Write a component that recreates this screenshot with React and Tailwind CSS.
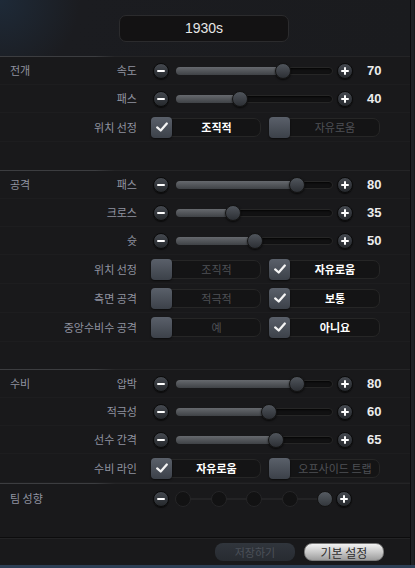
import React from "react";

const KR = { fontFamily: '"Noto Sans CJK KR", "Noto Sans", sans-serif' };
const NUM = { fontFamily: '"Liberation Sans", Arial, sans-serif' };

function RoundBtn({ plus }) {
  return (
    <div className="relative flex h-[16px] w-[16px] shrink-0 items-center justify-center rounded-full border border-[#0b0b0b] bg-[linear-gradient(to_bottom,#454950,#25282c)] shadow-[0_1px_1px_rgba(0,0,0,0.6)]">
      <div className="absolute h-[2px] w-[8px] rounded-[1px] bg-white" />
      {plus && <div className="absolute h-[8px] w-[2px] rounded-[1px] bg-white" />}
    </div>
  );
}

function Track({ value }) {
  const pos = `calc(${value / 100} * (100% - 16px) + 8px)`;
  return (
    <div className="relative ml-[7px] h-[16px] w-[157px] shrink-0">
      <div className="absolute left-0 right-0 top-[4px] h-[8px] rounded-full border border-[#262626] bg-[#111112] shadow-[inset_0_1px_2px_rgba(0,0,0,0.8)]" />
      <div
        className="absolute left-0 top-[4px] h-[8px] rounded-full bg-[linear-gradient(to_bottom,#66696e,#3f4246)]"
        style={{ width: pos }}
      />
      <div
        className="absolute top-0 h-[16px] w-[16px] -translate-x-1/2 rounded-full border border-[#141414] bg-[linear-gradient(to_bottom,#50555c,#2c2f34)] shadow-[0_1px_2px_rgba(0,0,0,0.7)]"
        style={{ left: pos }}
      />
    </div>
  );
}

function Label({ section, label }) {
  return (
    <div className="flex w-[137px] shrink-0 items-center justify-between pl-[10px] text-[11px] text-[#9093a0]" style={KR}>
      <span>{section}</span>
      <span>{label}</span>
    </div>
  );
}

function SliderRow({ section, label, value }) {
  return (
    <div className="flex h-[28px] items-center border-b border-[#1d1d1f]">
      <Label section={section} label={label} />
      <div className="ml-[16px] flex items-center">
        <RoundBtn />
        <Track value={value} />
        <div className="ml-[4px]">
          <RoundBtn plus />
        </div>
        <span className="ml-[14px] text-[13px] font-bold text-[#ececec]" style={NUM}>
          {value}
        </span>
      </div>
    </div>
  );
}

function Check() {
  return (
    <svg width="14" height="14" viewBox="0 0 16 16">
      <path d="M2.5 8.5 L6.5 12 L13.5 4" fill="none" stroke="#f4f4f4" strokeWidth="2.6" strokeLinecap="round" strokeLinejoin="round" />
    </svg>
  );
}

function Option({ text, on, width }) {
  return (
    <div className={`relative flex h-[21px] items-center ${width}`}>
      <div className="absolute left-0 right-0 top-[1px] h-[19px] rounded-[7px] border border-[#262626] bg-[#141415]" />
      <div className="relative z-10 flex h-[21px] w-[21px] shrink-0 items-center justify-center rounded-[4px] bg-[linear-gradient(to_bottom,#5a606a,#3c4149)] shadow-[0_1px_2px_rgba(0,0,0,0.6)]">
        {on && <Check />}
      </div>
      <span
        className={`relative z-10 flex-1 text-center text-[11px] ${on ? "font-bold text-white" : "text-[#4f5155]"}`}
        style={KR}
      >
        {text}
      </span>
    </div>
  );
}

function OptionRow({ section, label, a, b, sel }) {
  return (
    <div className="flex h-[29px] items-center border-b border-[#1d1d1f]">
      <Label section={section} label={label} />
      <div className="ml-[14px] flex items-center gap-[8px]">
        <Option text={a} on={sel === 0} width="w-[110px]" />
        <Option text={b} on={sel === 1} width="w-[111px]" />
      </div>
    </div>
  );
}

function Divider() {
  return <div className="h-px bg-[linear-gradient(to_right,#3c3d40_0,#3c3d40_95px,#242426_115px,#242426_100%)]" />;
}

function TeamRow() {
  const dots = [0, 1, 2, 3];
  return (
    <div className="flex h-[29px] items-center">
      <Label section="팀 성향" label="" />
      <div className="ml-[16px] flex items-center">
        <RoundBtn />
        <div className="relative ml-[6px] flex h-[16px] w-[158px] items-center justify-between">
          <div className="absolute left-[8px] right-[8px] top-[7px] h-[2px] bg-[#232325]" />
          {dots.map((d) => (
            <div key={d} className="relative h-[16px] w-[16px] rounded-full border border-[#252527] bg-[#121213]" />
          ))}
          <div className="relative h-[16px] w-[16px] rounded-full border border-[#141414] bg-[linear-gradient(to_bottom,#565b62,#33373c)]" />
        </div>
        <div className="ml-[3px]">
          <RoundBtn plus />
        </div>
      </div>
    </div>
  );
}

export default function App() {
  return (
    <div className="flex h-[568px] w-[415px] flex-col overflow-hidden bg-[#19191b]">
      <div className="flex flex-1">
        <div className="flex w-[411px] flex-col border-r border-[#0c0c0d]">
          {/* title */}
          <div className="h-[56px] bg-[radial-gradient(circle_at_0_0,#1e2a38_0,#1b1c20_80px,#1a1b1e_100%)] pt-[15px]">
            <div className="ml-[119px] flex h-[27px] w-[170px] items-center justify-center rounded-[7px] border border-[#2b2b2d] bg-[#131213]">
              <span className="text-[14px] text-[#e6e6e6]" style={{ fontFamily: '"Liberation Sans Narrow", "Liberation Sans", sans-serif' }}>
                1930s
              </span>
            </div>
          </div>

          <Divider />
          <SliderRow section="전개" label="속도" value={70} />
          <SliderRow label="패스" value={40} />
          <OptionRow label="위치 선정" a="조직적" b="자유로움" sel={0} />
          <div className="h-[28px]" />

          <Divider />
          <SliderRow section="공격" label="패스" value={80} />
          <SliderRow label="크로스" value={35} />
          <SliderRow label="슛" value={50} />
          <OptionRow label="위치 선정" a="조직적" b="자유로움" sel={1} />
          <OptionRow label="측면 공격" a="적극적" b="보통" sel={1} />
          <OptionRow label="중앙수비수 공격" a="예" b="아니요" sel={1} />
          <div className="h-[27px]" />

          <Divider />
          <SliderRow section="수비" label="압박" value={80} />
          <SliderRow label="적극성" value={60} />
          <SliderRow label="선수 간격" value={65} />
          <OptionRow label="수비 라인" a="자유로움" b="오프사이드 트랩" sel={0} />
          <Divider />
          <TeamRow />
          <div className="flex-1" />

          <div className="h-px bg-[#0c0c0d]" />
          <div className="h-px bg-[#232325]" />
          <div className="flex h-[26px] items-center justify-end gap-[9px] pr-[26px]">
            <button
              className="h-[18px] w-[80px] rounded-[8px] bg-[linear-gradient(to_bottom,#30353c,#272b31)] text-[11px] text-[#4b5058]"
              style={KR}
            >
              저장하기
            </button>
            <button
              className="h-[18px] w-[80px] rounded-[8px] border border-[#7a7a7a] bg-[linear-gradient(to_bottom,#f2f2f2,#c9c9c9_50%,#9d9d9d)] text-[12px] text-[#2e2e2e]"
              style={KR}
            >
              기본 설정
            </button>
          </div>
        </div>
        <div className="w-[3px] bg-[#202226]" />
      </div>
      <div className="h-[3px] bg-[#2d3f55]" />
    </div>
  );
}
